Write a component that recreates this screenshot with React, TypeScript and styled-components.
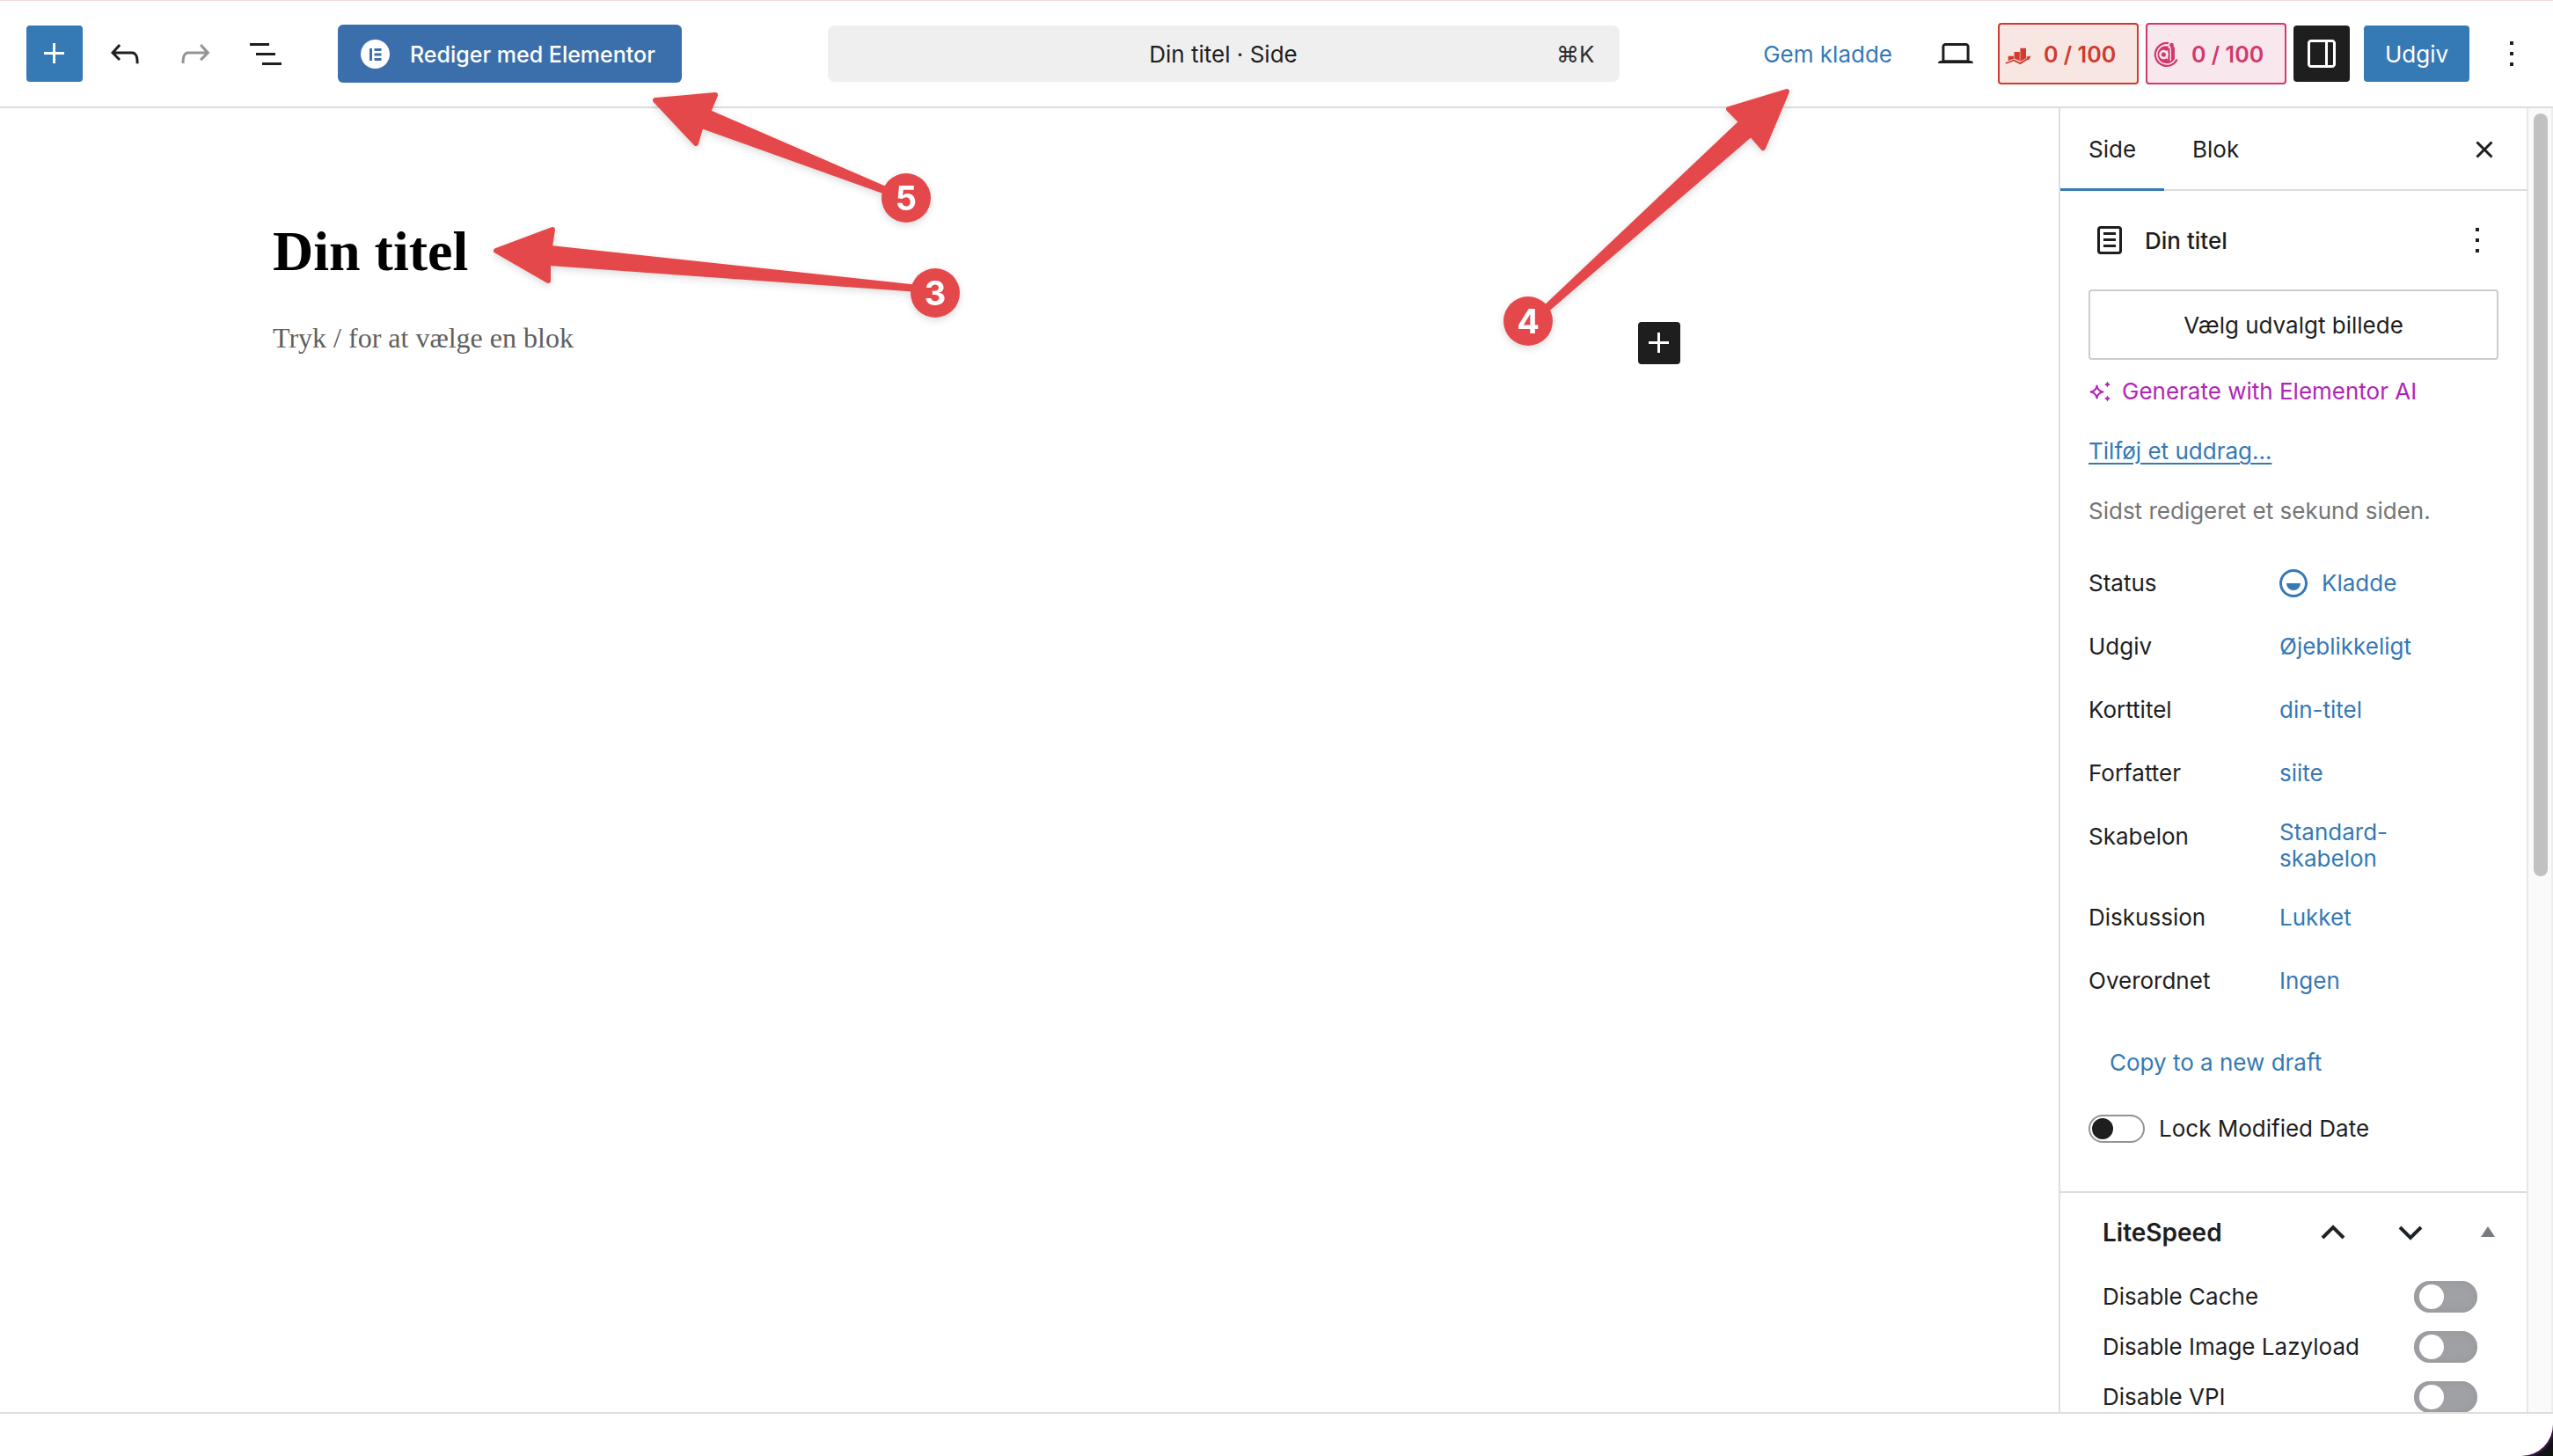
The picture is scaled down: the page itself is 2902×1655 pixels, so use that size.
import React from 'react';
import styled, { createGlobalStyle, css } from 'styled-components';

const color = {
  ink: '#1e1e1e',
  accent: '#3579b5',
  elementor: '#3b6fab',
  line: '#dddddd',
  muted: '#757575',
  ai: '#b026b8',
  mark: '#e5484b',
};

const GlobalStyle = createGlobalStyle`
  *, *::before, *::after { box-sizing: border-box; }
  body {
    margin: 0;
    overflow: hidden;
    background: #111312;
    color: ${color.ink};
    font-family: Inter, "Liberation Sans", sans-serif;
    font-size: 26px;
    line-height: 32px;
  }
  button { font: inherit; color: inherit; margin: 0; padding: 0; border: 0; background: none; cursor: pointer; }
  h1, h2, p, dl, dt, dd { margin: 0; }
  svg { display: block; flex: none; }
`;

const Window = styled.div`
  position: relative;
  display: grid;
  grid-template-rows: auto minmax(0, 1fr) auto;
  height: 100vh;
  overflow: hidden;
  background: #fff;
  border-bottom-right-radius: 36px;
  box-shadow: 0 0 0 3px #35153f;
`;

/* Top bar */

const Header = styled.header`
  display: flex;
  align-items: center;
  height: 123px;
  padding: 0 15px 0 30px;
  border-top: 1px solid #f3dada;
  border-bottom: 2px solid ${color.line};
`;

const Group = styled.div<{ $gap: number }>`
  display: flex;
  align-items: center;
  gap: ${(p) => p.$gap}px;
`;

const IconButton = styled.button<{ $tone?: 'accent' | 'dark'; $dim?: boolean; $size?: number }>`
  display: grid;
  place-items: center;
  flex: none;
  width: ${(p) => p.$size ?? 64}px;
  height: ${(p) => p.$size ?? 64}px;
  border-radius: 4px;
  color: ${(p) => (p.$tone ? '#fff' : p.$dim ? '#949494' : color.ink)};
  background: ${(p) => (p.$tone === 'accent' ? color.accent : p.$tone === 'dark' ? color.ink : 'transparent')};
`;

const ElementorButton = styled.button`
  display: flex;
  align-items: center;
  gap: 22px;
  height: 66px;
  margin-left: 34px;
  padding: 2px 30px 0 26px;
  border-radius: 6px;
  background: ${color.elementor};
  color: #fff;
  font-size: 25px;
  font-weight: 500;
  white-space: nowrap;
`;

const CommandSlot = styled.div`
  display: flex;
  flex: 1;
  justify-content: center;
  padding-left: 26px;
`;

const CommandBar = styled.button`
  display: grid;
  grid-template-columns: 1fr auto 1fr;
  align-items: center;
  width: 900px;
  height: 64px;
  padding: 2px 28px 0;
  border-radius: 8px;
  background: #efefef;
`;

const Shortcut = styled.span`
  justify-self: end;
  color: #2f2f2f;
`;

const TextButton = styled.button`
  height: 64px;
  padding: 2px 24px 0;
  color: ${color.accent};
  white-space: nowrap;
`;

const PublishButton = styled.button`
  width: 120px;
  height: 64px;
  padding-top: 2px;
  border-radius: 4px;
  background: ${color.accent};
  color: #fff;
`;

const ScoreButton = styled.button<{ $ink: string; $fill: string }>`
  display: grid;
  grid-template-columns: 30px auto;
  align-items: center;
  gap: 14px;
  width: 160px;
  height: 70px;
  padding: 2px 0 0 6px;
  border: 2px solid ${(p) => p.$ink};
  border-radius: 4px;
  background: ${(p) => p.$fill};
  color: ${(p) => p.$ink};
  font-size: 25px;
  font-weight: 600;
  text-align: left;
`;

/* Body */

const Body = styled.div`
  display: flex;
  min-height: 0;
`;

const Canvas = styled.main`
  flex: 1;
  min-width: 0;
  padding-top: 125px;
`;

const Post = styled.div`
  max-width: 1720px;
  margin: 0 auto;
  font-family: "Liberation Serif", "Times New Roman", serif;
`;

const PostTitle = styled.h1`
  color: #000;
  font-size: 64px;
  font-weight: 700;
  line-height: 76px;
`;

const BlockRow = styled.div`
  display: flex;
  align-items: flex-start;
  justify-content: space-between;
  margin-top: 42px;
  padding-right: 120px;
`;

const Prompt = styled.p`
  color: #606060;
  font-size: 32px;
  line-height: 36px;
`;

/* Sidebar */

const Sidebar = styled.aside`
  display: flex;
  flex-direction: column;
  width: 532px;
  border-left: 2px solid ${color.line};
  overflow: hidden;
`;

const Tabs = styled.div`
  display: flex;
  align-items: stretch;
  flex: none;
  height: 94px;
  padding-right: 24px;
  box-shadow: inset 0 -2px 0 ${color.line};
`;

const Tab = styled.button<{ $active?: boolean }>`
  padding: 0 32px;
  ${(p) => p.$active && css`box-shadow: inset 0 -3px 0 ${color.accent};`}
`;

const TabsEnd = styled.div`
  display: flex;
  align-items: center;
  margin-left: auto;
`;

const Panel = styled.section`
  display: flex;
  flex-direction: column;
  align-items: flex-start;
  flex: none;
  padding: 24px 32px 55px;
  border-bottom: 2px solid ${color.line};
`;

const CardHeader = styled.div`
  display: flex;
  align-items: center;
  gap: 16px;
  width: 100%;
  height: 64px;
`;

const CardTitle = styled.h2`
  flex: 1;
  padding-top: 2px;
  font-size: 26px;
  font-weight: 500;
`;

const OutlineButton = styled.button`
  width: 100%;
  height: 80px;
  margin: 24px 0 20px;
  padding-top: 2px;
  border: 2px solid #cccccc;
  border-radius: 4px;
`;

const AiButton = styled.button`
  display: flex;
  align-items: center;
  gap: 12px;
  color: ${color.ai};
`;

const ExcerptLink = styled.a`
  margin-top: 36px;
  color: ${color.accent};
  text-underline-offset: 4px;
  text-decoration-thickness: 2px;
`;

const Edited = styled.p`
  margin-top: 36px;
  color: ${color.muted};
`;

const Fields = styled.dl`
  display: flex;
  flex-direction: column;
  gap: 8px;
  width: 100%;
  margin-top: 34px;
`;

const Field = styled.div`
  display: grid;
  grid-template-columns: 217px 1fr;
  align-items: start;
`;

const FieldName = styled.dt`
  line-height: 64px;
`;

const FieldButton = styled.button`
  display: flex;
  align-items: center;
  gap: 16px;
  max-width: 180px;
  min-height: 64px;
  padding: 12px 0;
  color: ${color.accent};
  line-height: 30px;
  text-align: left;
`;

const CopyButton = styled(TextButton)`
  margin: 28px 0;
`;

const LockRow = styled.label`
  display: flex;
  align-items: center;
  gap: 16px;
`;

const LockSwitch = styled.input`
  appearance: none;
  display: flex;
  align-items: center;
  width: 64px;
  height: 32px;
  margin: 0;
  padding: 0 2px;
  border: 2px solid #949494;
  border-radius: 16px;

  &::before {
    content: '';
    width: 24px;
    height: 24px;
    border-radius: 50%;
    background: ${color.ink};
  }
`;

const BoxHeader = styled.div`
  display: grid;
  grid-template-columns: 1fr 88px 88px 88px;
  align-items: center;
  height: 90px;
  padding-left: 48px;
`;

const BoxTitle = styled.h2`
  font-size: 28px;
  font-weight: 600;
`;

const BoxButton = styled.button`
  display: grid;
  place-items: center;
  height: 64px;
`;

const Options = styled.div`
  display: flex;
  flex-direction: column;
  gap: 21px;
  padding: 10px 56px 0 48px;
`;

const Option = styled.label`
  display: flex;
  align-items: center;
  justify-content: space-between;
  height: 36px;
`;

const OptionSwitch = styled.input`
  appearance: none;
  display: flex;
  align-items: center;
  width: 72px;
  height: 36px;
  margin: 0;
  padding: 0 6px;
  border-radius: 18px;
  background: #a0a1a5;
  box-shadow: inset 0 0 12px #97989c;

  &::before {
    content: '';
    width: 28px;
    height: 28px;
    border-radius: 50%;
    background: #fff;
  }
`;

const ScrollTrack = styled.div`
  flex: none;
  width: 30px;
  padding: 6px;
  border-left: 2px solid #e8e8e8;
  border-right: 2px solid #ededed;
  background: #fafafa;
`;

const ScrollThumb = styled.div`
  width: 16px;
  height: 59%;
  border-radius: 8px;
  background: #c1c1c1;
`;

const Footer = styled.footer`
  height: 50px;
  border-top: 2px solid ${color.line};
`;

/* Numbered arrows over the page */

const Overlay = styled.div`
  position: absolute;
  inset: 0;
  pointer-events: none;
  filter: drop-shadow(0 3px 4px rgba(0, 0, 0, 0.14));
`;

const ArrowLayer = styled.svg`
  position: absolute;
  inset: 0;
  width: 100%;
  height: 100%;
`;

const Marker = styled.span<{ $x: number; $y: number }>`
  position: absolute;
  left: ${(p) => p.$x - 28}px;
  top: ${(p) => p.$y - 28}px;
  width: 56px;
  height: 56px;
  border-radius: 50%;
  background: ${color.mark};
  color: #fff;
  font-size: 38px;
  font-weight: 700;
  line-height: 56px;
  text-align: center;
`;

const glyphs = {
  plus: 'M11 12.5V17.5H12.5V12.5H17.5V11H12.5V6H11V11H6V12.5H11Z',
  undo: 'M18.3 11.7c-.6-.6-1.4-.9-2.3-.9H6.7l2.9-3.3-1.1-1-4.5 5L8.5 16l1-1-2.7-2.7H16c.5 0 .9.2 1.3.5 1 1 1 3.4 1 4.5v.3h1.5v-.2c0-1.5 0-4.3-1.5-5.7z',
  redo: 'M15.6 6.5l-1.1 1 2.9 3.3H8c-.9 0-1.7.3-2.3.9-1.4 1.5-1.4 4.2-1.4 5.6v.2h1.5v-.3c0-1.1 0-3.5 1-4.5.3-.3.7-.5 1.3-.5h9.2L14.5 15l1.1 1.1 4.6-4.6-4.6-5z',
  list: 'M3 6h11v1.5H3V6Zm3.5 5.5h11V13h-11v-1.5ZM21 17H10v1.5h11V17Z',
  laptop:
    'M20.5 16h-.7V8c0-1.1-.9-2-2-2H6.2c-1.1 0-2 .9-2 2v8h-.7c-.8 0-1.5.7-1.5 1.5h20c0-.8-.7-1.5-1.5-1.5zM5.7 8c0-.3.2-.5.5-.5h11.6c.3 0 .5.2.5.5v7.6H5.7V8z',
  drawer:
    'M18 4H6c-1.1 0-2 .9-2 2v12c0 1.1.9 2 2 2h12c1.1 0 2-.9 2-2V6c0-1.1-.9-2-2-2zm-4 14.5H6c-.3 0-.5-.2-.5-.5V6c0-.3.2-.5.5-.5h8v13zm4.5-.5c0 .3-.2.5-.5.5h-2.5v-13H18c.3 0 .5.2.5.5v12z',
  more: 'M13 19h-2v-2h2v2zm0-6h-2v-2h2v2zm0-6h-2V5h2v2z',
  close:
    'M12 13.06l3.712 3.713 1.061-1.06L13.061 12l3.712-3.712-1.06-1.06L12 10.938 8.288 7.227l-1.061 1.06L10.939 12l-3.712 3.712 1.06 1.061L12 13.061z',
  page: 'M15.5 7.5h-7V9h7V7.5Zm-7 3.5h7v1.5h-7V11Zm7 3.5h-7V16h7v-1.5ZM17 4H7a2 2 0 0 0-2 2v12a2 2 0 0 0 2 2h10a2 2 0 0 0 2-2V6a2 2 0 0 0-2-2ZM7 5.5h10a.5.5 0 0 1 .5.5v12a.5.5 0 0 1-.5.5H7a.5.5 0 0 1-.5-.5V6a.5.5 0 0 1 .5-.5Z',
};

const Glyph = ({ name }: { name: keyof typeof glyphs }) => (
  <svg width="48" height="48" viewBox="0 0 24 24" fill="currentColor" fillRule="evenodd" aria-hidden="true">
    <path d={glyphs[name]} />
  </svg>
);

const ElementorMark = () => (
  <svg width="34" height="34" viewBox="0 0 34 34" aria-hidden="true">
    <circle cx="16.500" cy="16.500" r="16.500" fill="#fff" />
    <path fill={color.elementor} d="M10 10h3v14h-3zM15.500 10h8v3h-8zM15.500 15.500h8v3h-8zM15.500 21h8v3h-8z" />
  </svg>
);

const SeoMark = () => (
  <svg width="30" height="30" viewBox="0 0 30 30" aria-hidden="true">
    <path
      fill="currentColor"
      d="M3.700 16.700h6.400v3l-6.400 2.300zM10.600 12h6.200v10.200l-6.200-2.800zM17.400 7.700H24v11.500l-6.600 3.800z"
    />
    <path d="M.8 25l9.200-3.500 7.500 3.600L27 19" fill="none" stroke="currentColor" strokeWidth="1.800" />
    <path fill="currentColor" d="M24 17.600l5.500-.8-2.500 4.700z" />
  </svg>
);

const AiScoreMark = () => (
  <svg width="30" height="30" viewBox="0 0 30 30" fill="none" aria-hidden="true">
    <path d="M18 2.100A13 13 0 1 0 27.600 20.500" stroke="currentColor" strokeWidth="2.200" />
    <circle cx="21.500" cy="4.200" r="2.400" fill="currentColor" />
    <path
      fill="currentColor"
      d="M12.500 5.500h5.300V8H20a2 2 0 0 1 5 .5V20a10.500 10.500 0 0 1-10.500 5A10 10 0 0 1 12.500 5.500z"
    />
    <g stroke="#f8e7ed">
      <circle cx="12.400" cy="15" r="3.900" strokeWidth="2.600" />
      <path d="M16.600 10.200v10M20.300 8v14" strokeWidth="1.400" />
    </g>
  </svg>
);

const Sparkles = () => (
  <svg width="26" height="26" viewBox="0 0 26 26" aria-hidden="true">
    <path
      d="M9.500 6.500Q10.500 12.500 16.500 13.500Q10.500 14.500 9.500 20.500Q8.500 14.500 2.500 13.500Q8.500 12.500 9.500 6.500Z"
      fill="none"
      stroke="currentColor"
      strokeWidth="2"
      strokeLinejoin="round"
    />
    <path fill="currentColor" d="M21.500 1.500l1.200 2.300 2.300 1.200-2.300 1.200-1.200 2.300-1.200-2.300L18 5l2.300-1.200zM21.500 17.500l1.200 2.300 2.300 1.200-2.300 1.200-1.200 2.300-1.200-2.300L18 21l2.300-1.200z" />
  </svg>
);

const DraftMark = () => (
  <svg width="32" height="32" viewBox="0 0 32 32" aria-hidden="true">
    <circle cx="16" cy="16" r="14.500" fill="none" stroke="currentColor" strokeWidth="3" />
    <path d="M8 16h16a8 8 0 0 1-16 0z" fill="currentColor" />
  </svg>
);

const Chevron = ({ down }: { down?: boolean }) => (
  <svg width="28" height="18" viewBox="0 0 28 18" fill="none" stroke="#1d2327" strokeWidth="4" aria-hidden="true">
    <path d={down ? 'M2 3l12 12L26 3' : 'M2 15L14 3l12 12'} />
  </svg>
);

const fields = [
  { name: 'Status', value: 'Kladde', icon: true },
  { name: 'Udgiv', value: 'Øjeblikkeligt' },
  { name: 'Korttitel', value: 'din-titel' },
  { name: 'Forfatter', value: 'siite' },
  { name: 'Skabelon', value: 'Standard-skabelon' },
  { name: 'Diskussion', value: 'Lukket' },
  { name: 'Overordnet', value: 'Ingen' },
];

const options = ['Disable Cache', 'Disable Image Lazyload', 'Disable VPI'];

const arrows = [
  { head: '745,114 813,108 805,127 796,146 791,163', shaft: '807,125 1012,214 1012,223 797,146' },
  { head: '564,285 628,261 625,280 623,301 623,319', shaft: '626,279 1044,324 1044,332 625,302' },
  { head: '2031,104 1965,124 1979,138 1990,152 2004,168', shaft: '1977,137 1750,352 1757,357 1993,154' },
];

export default function App() {
  return (
    <Window>
      <GlobalStyle />
      <Header>
        <Group $gap={16}>
          <IconButton $tone="accent" aria-label="Tilføj blok"><Glyph name="plus" /></IconButton>
          <IconButton aria-label="Fortryd"><Glyph name="undo" /></IconButton>
          <IconButton $dim aria-label="Gentag"><Glyph name="redo" /></IconButton>
          <IconButton aria-label="Dokumentoversigt"><Glyph name="list" /></IconButton>
          <ElementorButton><ElementorMark />Rediger med Elementor</ElementorButton>
        </Group>
        <CommandSlot>
          <CommandBar>
            <span />
            <span>Din titel · Side</span>
            <Shortcut>⌘K</Shortcut>
          </CommandBar>
        </CommandSlot>
        <Group $gap={16}>
          <TextButton>Gem kladde</TextButton>
          <IconButton aria-label="Vis"><Glyph name="laptop" /></IconButton>
          <Group $gap={8}>
            <ScoreButton $ink="#d03a2f" $fill="#f7e6e2"><SeoMark />0 / 100</ScoreButton>
            <ScoreButton $ink="#d2396b" $fill="#f8e7ed"><AiScoreMark />0 / 100</ScoreButton>
            <IconButton $tone="dark" aria-label="Indstillinger"><Glyph name="drawer" /></IconButton>
          </Group>
          <PublishButton>Udgiv</PublishButton>
          <IconButton aria-label="Valgmuligheder"><Glyph name="more" /></IconButton>
        </Group>
      </Header>

      <Body>
        <Canvas>
          <Post>
            <PostTitle>Din titel</PostTitle>
            <BlockRow>
              <Prompt>Tryk / for at vælge en blok</Prompt>
              <IconButton $tone="dark" $size={48} aria-label="Tilføj blok"><Glyph name="plus" /></IconButton>
            </BlockRow>
          </Post>
        </Canvas>

        <Sidebar>
          <Tabs role="tablist">
            <Tab role="tab" aria-selected="true" $active>Side</Tab>
            <Tab role="tab" aria-selected="false">Blok</Tab>
            <TabsEnd>
              <IconButton $size={48} aria-label="Luk"><Glyph name="close" /></IconButton>
            </TabsEnd>
          </Tabs>

          <Panel>
            <CardHeader>
              <Glyph name="page" />
              <CardTitle>Din titel</CardTitle>
              <IconButton $size={48} aria-label="Handlinger"><Glyph name="more" /></IconButton>
            </CardHeader>
            <OutlineButton>Vælg udvalgt billede</OutlineButton>
            <AiButton><Sparkles />Generate with Elementor AI</AiButton>
            <ExcerptLink href="#uddrag">Tilføj et uddrag…</ExcerptLink>
            <Edited>Sidst redigeret et sekund siden.</Edited>
            <Fields>
              {fields.map((f) => (
                <Field key={f.name}>
                  <FieldName>{f.name}</FieldName>
                  <dd>
                    <FieldButton>{f.icon && <DraftMark />}{f.value}</FieldButton>
                  </dd>
                </Field>
              ))}
            </Fields>
            <CopyButton>Copy to a new draft</CopyButton>
            <LockRow>
              <LockSwitch type="checkbox" />
              Lock Modified Date
            </LockRow>
          </Panel>

          <section>
            <BoxHeader>
              <BoxTitle>LiteSpeed</BoxTitle>
              <BoxButton aria-label="Flyt op"><Chevron /></BoxButton>
              <BoxButton aria-label="Flyt ned"><Chevron down /></BoxButton>
              <BoxButton aria-label="Fold sammen">
                <svg width="16" height="14" viewBox="0 0 16 14" fill="#787c82" aria-hidden="true"><path d="M8 0l8 12H0z" /></svg>
              </BoxButton>
            </BoxHeader>
            <Options>
              {options.map((name) => (
                <Option key={name}>
                  {name}
                  <OptionSwitch type="checkbox" />
                </Option>
              ))}
            </Options>
          </section>
        </Sidebar>
        <ScrollTrack><ScrollThumb /></ScrollTrack>
      </Body>
      <Footer />

      <Overlay>
        <ArrowLayer fill={color.mark} aria-hidden="true">
          {arrows.map((a) => (
            <g key={a.head}>
              <polygon points={a.shaft} />
              <polygon points={a.head} stroke={color.mark} strokeWidth="6" strokeLinejoin="round" />
            </g>
          ))}
        </ArrowLayer>
        <Marker $x={1063} $y={333}>3</Marker>
        <Marker $x={1737} $y={365}>4</Marker>
        <Marker $x={1030} $y={225}>5</Marker>
      </Overlay>
    </Window>
  );
}
